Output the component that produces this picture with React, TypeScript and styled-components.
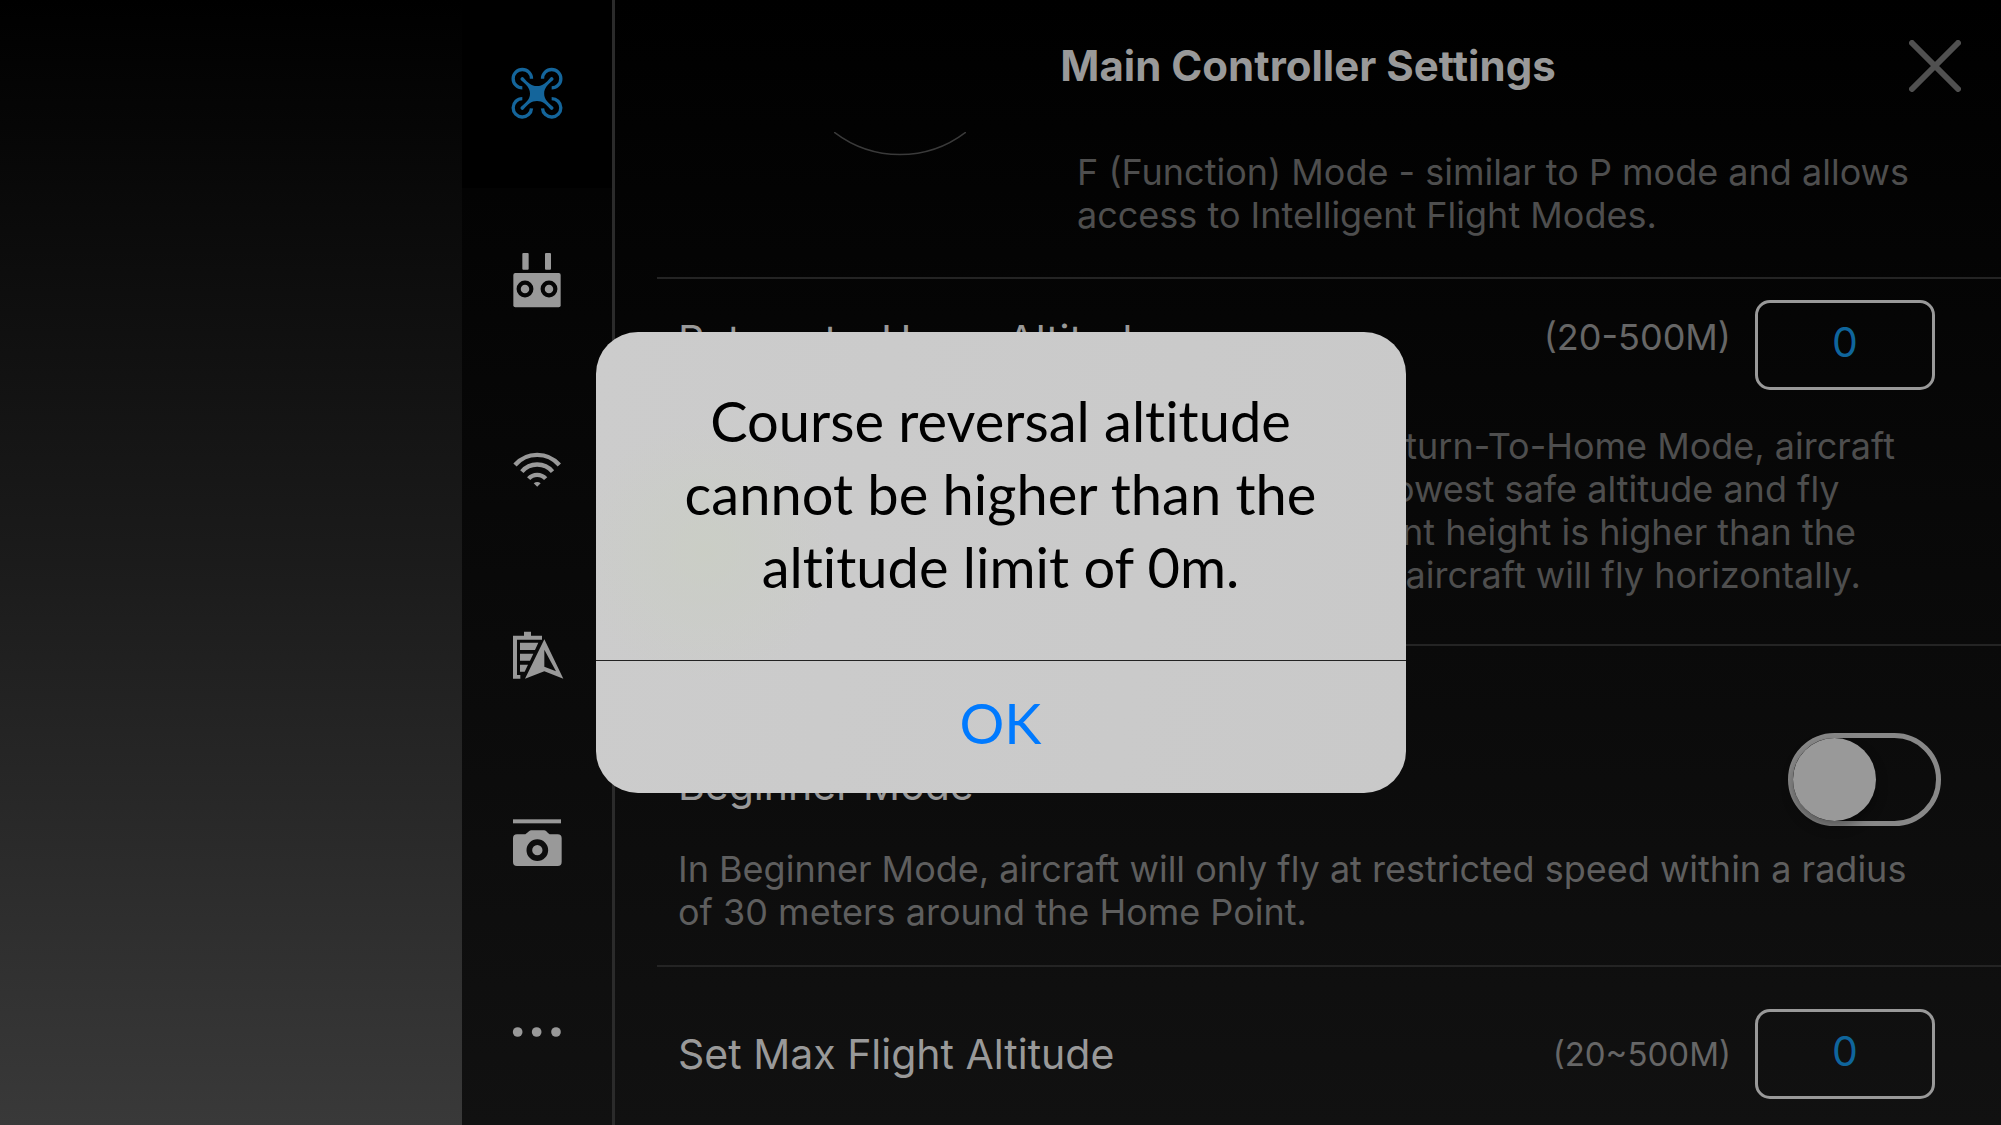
import React, { useState } from "react";
import styled, { createGlobalStyle } from "styled-components";

const GlobalStyle = createGlobalStyle`
  * { box-sizing: border-box; }
  html, body { margin: 0; background: #000; }
  body { font-family: Inter, Roboto, sans-serif; color: #999; }
  button { font: inherit; color: inherit; background: none; border: 0; padding: 0; cursor: pointer; }
  h1, h2, p { margin: 0; font-weight: 400; }
`;

const Screen = styled.div`
  display: grid;
  grid-template-columns: minmax(0, 462fr) minmax(0, 1539fr);
  height: 100vh;
  overflow: hidden;
  background: linear-gradient(#000, #1b1b1b 50%, #393939);
`;

const Panel = styled.div`
  grid-column: 2;
  display: flex;
  min-height: 0;
  background: linear-gradient(#000, #080808 45%, #111);
`;

const Tabs = styled.nav`
  display: grid;
  grid-auto-rows: 1fr;
  flex: 0 0 153px;
  border-right: 3px solid #2b2b2b;
`;

const Tab = styled.button<{ $active?: boolean }>`
  display: flex;
  align-items: center;
  justify-content: center;
  color: ${(p) => (p.$active ? "#14659b" : "#999")};
  background: ${(p) => (p.$active ? "#000" : "transparent")};
  svg { width: 60px; height: 60px; fill: currentColor; }
`;

const Main = styled.main`
  flex: 1;
  min-width: 0;
  display: flex;
  flex-direction: column;
`;

const Header = styled.header`
  display: grid;
  grid-template-columns: 92px 1fr 92px;
  align-items: center;
  flex: 0 0 132px;
`;

const Title = styled.h1`
  grid-column: 2;
  text-align: center;
  font-size: 42px;
  line-height: 52px;
  font-weight: 700;
`;

const Close = styled.button`
  width: 52px;
  height: 52px;
  svg { display: block; width: 52px; height: 52px; }
`;

const Section = styled.section<{ $top: number; $bottom: number }>`
  flex: none;
  margin-left: 42px;
  padding: ${(p) => p.$top}px 66px ${(p) => p.$bottom}px 21px;
  border-bottom: 2px solid #242424;
`;

const ModeRow = styled.div`
  display: grid;
  grid-template-columns: 399px 1fr;
`;

const Dial = styled.svg`
  width: 132px;
  height: 24px;
  margin: -19px 0 0 156px;
`;

const Row = styled.div`
  display: flex;
  align-items: center;
  min-height: 90px;
  gap: 24px;
`;

const Name = styled.label<{ $above?: number; $below?: number }>`
  flex: 1;
  padding: ${(p) => p.$above || 0}px 0 ${(p) => p.$below || 0}px;
  font-size: 41px;
  line-height: 52px;
`;

const Range = styled.span<{ $small?: boolean }>`
  padding-bottom: ${(p) => (p.$small ? 0 : 16)}px;
  font-size: ${(p) => (p.$small ? 33 : 36)}px;
  line-height: 43px;
  color: #666;
`;

const Value = styled.input`
  width: 180px;
  height: 90px;
  padding: 0 0 6px;
  border: 3px solid #999;
  border-radius: 15px;
  background: transparent;
  color: #0f659c;
  font: 41px Inter, Roboto, sans-serif;
  text-align: center;
  outline: none;
`;

const Text = styled.p<{ $gap?: number; $indent?: boolean; $light?: boolean }>`
  margin-top: ${(p) => p.$gap || 0}px;
  margin-left: ${(p) => (p.$indent ? 399 : 0)}px;
  font-size: 36px;
  line-height: 43px;
  white-space: nowrap;
  color: ${(p) => (p.$light ? "#5e5e5e" : "#4e4e4e")};
`;

const Toggle = styled.input`
  appearance: none;
  width: 153px;
  height: 93px;
  margin: 0 -6px 0 0;
  border: 5px solid #888;
  border-radius: 47px;
  display: flex;
  cursor: pointer;
  &::before {
    content: "";
    width: 83px;
    height: 83px;
    border-radius: 50%;
    background: #999;
    box-shadow: 0 6px 12px rgba(0, 0, 0, 0.35);
  }
  &:checked { justify-content: flex-end; }
`;

const Overlay = styled.div`
  position: fixed;
  inset: 0;
  display: flex;
  align-items: center;
  justify-content: center;
`;

const Alert = styled.div`
  width: 810px;
  border-radius: 42px;
  overflow: hidden;
  font-family: Lato, sans-serif;
  font-size: 56px;
  font-variant-ligatures: none;
  line-height: 73px;
  text-align: center;
  color: #000;
  background:
    radial-gradient(circle at 110px 220px, rgba(202, 206, 196, 0.8), rgba(202, 206, 196, 0) 130px),
    linear-gradient(100deg, #cccccc, #c9c9c9);
`;

const Message = styled.p`
  padding: 52px 60px 57px;
  border-bottom: 1px solid #222;
`;

const Confirm = styled.button`
  display: block;
  width: 100%;
  padding: 25px 0 34px;
  color: #007aff;
`;

const icons: Record<string, React.ReactNode> = {
  Aircraft: (
    <svg viewBox="141 71 180 180">
      <g fill="none" stroke="currentColor" strokeWidth="10">
        <path d="M214.500 115A27.500 27.500 0 1 0 187 142.500" />
        <path d="M247.500 115A27.500 27.500 0 1 1 275 142.500" />
        <path d="M214.500 204A27.500 27.500 0 1 1 187 175" />
        <path d="M247.500 204A27.500 27.500 0 1 0 275 175" />
      </g>
      <path d="M191 112C203 127 214 137 231 137C248 137 259 127 271 112A5.500 5.500 0 0 1 279 120C264 132 252.500 143 252.500 160C252.500 176 264 187 279 199A5.500 5.500 0 0 1 271 207C259 192 248 182 231 182C214 182 203 192 191 207A5.500 5.500 0 0 1 183 199C198 187 210 176 210 160C210 143 198 132 183 120A5.500 5.500 0 0 1 191 112Z" />
    </svg>
  ),
  "Remote controller": (
    <svg viewBox="141 634 180 180">
      <rect x="187" y="640" width="19" height="50" rx="3" />
      <rect x="255" y="640" width="18" height="50" rx="3" />
      <rect x="160" y="700" width="142" height="103" rx="6" />
      <g fill="none" stroke="#050505" strokeWidth="12.500">
        <circle cx="195" cy="748" r="19" />
        <circle cx="267" cy="748" r="19" />
      </g>
    </svg>
  ),
  Transmission: (
    <svg viewBox="141 56 180 180">
      <g fill="none" stroke="currentColor" strokeWidth="13">
        <path d="M165 134A88 88 0 0 1 298 134" />
        <path d="M185.500 154A60 60 0 0 1 277.500 154" />
        <path d="M206 175A34 34 0 0 1 257 175" />
      </g>
      <path d="M221 189Q231.500 181 242 189L231.500 199Z" />
    </svg>
  ),
  Battery: (
    <svg viewBox="141 619 180 180">
      <path d="M159 648H192V636H213V648H246V660H171V766H181V777H159Z" />
      <path d="M180 669H235L225 691H180ZM180 702H220L210 723H180ZM180 735H204L194 756H180Z" />
      <path fillRule="evenodd" d="M253 659L310 777L253 755L195 777ZM253 690V741L288 755Z" />
    </svg>
  ),
  Camera: (
    <svg viewBox="141 101 180 180">
      <rect x="159" y="117" width="144" height="12" />
      <path d="M171 162H196Q202 158 207 153Q210 150 214 150H252Q256 150 259 153Q264 159 269 162H293Q305 162 305 174V245Q305 257 293 257H171Q159 257 159 245V174Q159 162 171 162Z" />
      <circle cx="232" cy="209.500" r="24" fill="none" stroke="#0d0d0d" strokeWidth="17" />
    </svg>
  ),
  More: (
    <svg viewBox="141 664 180 180">
      <circle cx="173" cy="757" r="14.500" />
      <circle cx="230" cy="757" r="14.500" />
      <circle cx="288" cy="757" r="14.500" />
    </svg>
  ),
};

export default function App() {
  const [open, setOpen] = useState(true);
  const [tab, setTab] = useState("Aircraft");
  return (
    <>
      <GlobalStyle />
      <Screen>
        <Panel>
          <Tabs>
            {Object.keys(icons).map((name) => (
              <Tab key={name} $active={name === tab} aria-label={name} onClick={() => setTab(name)}>
                {icons[name]}
              </Tab>
            ))}
          </Tabs>
          <Main>
            <Header>
              <Title>Main Controller Settings</Title>
              <Close aria-label="Close">
                <svg viewBox="0 0 52 52" fill="none" stroke="#505050" strokeWidth="6" strokeLinecap="round">
                  <path d="M3 3L49 49M49 3L3 49" />
                </svg>
              </Close>
            </Header>
            <Section $top={19} $bottom={40}>
              <ModeRow>
                <Dial viewBox="0 0 132 24" fill="none" stroke="#3a3a3a" strokeWidth="1.500">
                  <path d="M0 0A108 108 0 0 0 132 0" />
                </Dial>
                <Text>
                  F (Function) Mode - similar to P mode and allows
                  <br />
                  access to Intelligent Flight Modes.
                </Text>
              </ModeRow>
            </Section>
            <Section $top={21} $bottom={47}>
              <Row>
                <Name htmlFor="rth" $below={10}>Return-to-Home Altitude</Name>
                <Range>(20-500M)</Range>
                <Value id="rth" defaultValue="0" />
              </Row>
              <Text $gap={35} $indent>
                When activating Return-To-Home Mode, aircraft
                <br />
                will ascend to the lowest safe altitude and fly
                <br />
                home. If your current height is higher than the
                <br />
                preset altitude, the aircraft will fly horizontally.
              </Text>
            </Section>
            <Section $top={87} $bottom={31}>
              <Row>
                <Name htmlFor="beginner" $above={10}>Beginner Mode</Name>
                <Toggle id="beginner" type="checkbox" role="switch" />
              </Row>
              <Text $gap={22} $light>
                In Beginner Mode, aircraft will only fly at restricted speed within a radius
                <br />
                of 30 meters around the Home Point.
              </Text>
            </Section>
            <Section $top={42} $bottom={42}>
              <Row>
                <Name htmlFor="max">Set Max Flight Altitude</Name>
                <Range $small>(20~500M)</Range>
                <Value id="max" defaultValue="0" />
              </Row>
            </Section>
          </Main>
        </Panel>
      </Screen>
      {open && (
        <Overlay>
          <Alert role="alertdialog" aria-describedby="message">
            <Message id="message">
              Course reversal altitude cannot be higher than the altitude limit of 0m.
            </Message>
            <Confirm onClick={() => setOpen(false)}>OK</Confirm>
          </Alert>
        </Overlay>
      )}
    </>
  );
}
